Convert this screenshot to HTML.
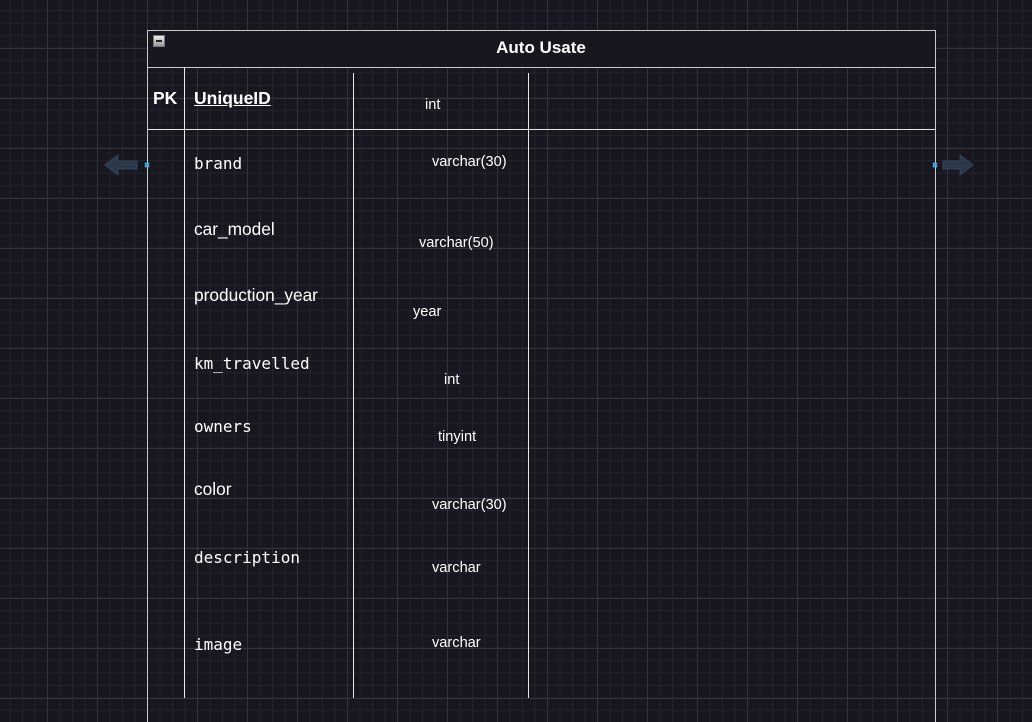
<!DOCTYPE html>
<html><head><style>
html,body{margin:0;padding:0}
body{width:1032px;height:722px;overflow:hidden;position:relative;background-color:#18161f;
background-image:
linear-gradient(to right,#34323a 1px,transparent 1px),
linear-gradient(to bottom,#34323a 1px,transparent 1px),
linear-gradient(to right,#24222b 1px,transparent 1px),
linear-gradient(to bottom,#24222b 1px,transparent 1px);
background-size:50px 50px,50px 50px,12.5px 12.5px,12.5px 12.5px;
background-position:47px 48px,47px 48px,9.5px 10px,9.5px 10px;
font-family:"Liberation Sans",sans-serif;color:#fff}
.a{position:absolute}
.vl{position:absolute;width:1px;background:#e8e8e8}
.hl{position:absolute;height:1px;background:#c8c8c8}
.m{font-family:"DejaVu Sans Mono","Liberation Mono",monospace;font-size:16px}
.s{font-size:17.3px}
.t{font-size:14.6px}
</style></head><body>
<div class="a" style="left:147px;top:30px;width:788px;height:37px;background:#18161f"></div>
<div class="hl" style="left:147px;top:30px;width:789px"></div>
<div class="hl" style="left:147px;top:67px;width:789px"></div>
<div class="hl" style="left:147px;top:129px;width:789px;background:#e8e8e8"></div>
<div class="vl" style="left:147px;top:30px;height:692px;background:#c8c8c8"></div>
<div class="vl" style="left:935px;top:30px;height:692px;background:#c8c8c8"></div>
<div class="vl" style="left:184px;top:67px;height:631px"></div>
<div class="vl" style="left:353px;top:73px;height:625px"></div>
<div class="vl" style="left:528px;top:73px;height:625px"></div>
<div class="a" style="left:153px;top:35px;width:12px;height:12px;background:linear-gradient(#eee,#999);border:1px solid #777;box-sizing:border-box"><div style="position:absolute;left:2px;top:4px;width:6px;height:2px;background:#222"></div></div>
<div class="a" style="left:147px;top:38px;width:788px;text-align:center;font-weight:bold;font-size:17px">Auto Usate</div>
<div class="a" style="left:153px;top:88px;font-weight:bold;font-size:17.5px">PK</div>
<div class="a" style="left:194px;top:88px;font-weight:bold;font-size:17.5px;text-decoration:underline">UniqueID</div>
<div class="a t" style="left:425px;top:97px">int</div>
<div class="a m" style="left:194px;top:154px">brand</div>
<div class="a t" style="left:432px;top:154px">varchar(30)</div>
<div class="a s" style="left:194px;top:219px">car_model</div>
<div class="a t" style="left:419px;top:235px">varchar(50)</div>
<div class="a s" style="left:194px;top:285px">production_year</div>
<div class="a t" style="left:413px;top:304px">year</div>
<div class="a m" style="left:194px;top:354px">km_travelled</div>
<div class="a t" style="left:444px;top:372px">int</div>
<div class="a m" style="left:194px;top:417px">owners</div>
<div class="a t" style="left:438px;top:429px">tinyint</div>
<div class="a s" style="left:194px;top:479px">color</div>
<div class="a t" style="left:432px;top:497px">varchar(30)</div>
<div class="a m" style="left:194px;top:548px">description</div>
<div class="a t" style="left:432px;top:560px">varchar</div>
<div class="a m" style="left:194px;top:635px">image</div>
<div class="a t" style="left:432px;top:635px">varchar</div>
<svg class="a" style="left:100px;top:150px" width="52" height="30"><polygon points="5,15 18,5 18,11 37,11 37,19 18,19 18,25" fill="#2a3a4a" stroke="#33475a"/><path d="M45,13 L49,17 M49,13 L45,17" stroke="#3ab0e8" stroke-width="2"/></svg>
<svg class="a" style="left:928px;top:150px" width="50" height="30"><path d="M5,13 L9,17 M9,13 L5,17" stroke="#3ab0e8" stroke-width="2"/><polygon points="45,15 32,5 32,11 15,11 15,19 32,19 32,25" fill="#2a3a4a" stroke="#33475a"/></svg>
</body></html>
